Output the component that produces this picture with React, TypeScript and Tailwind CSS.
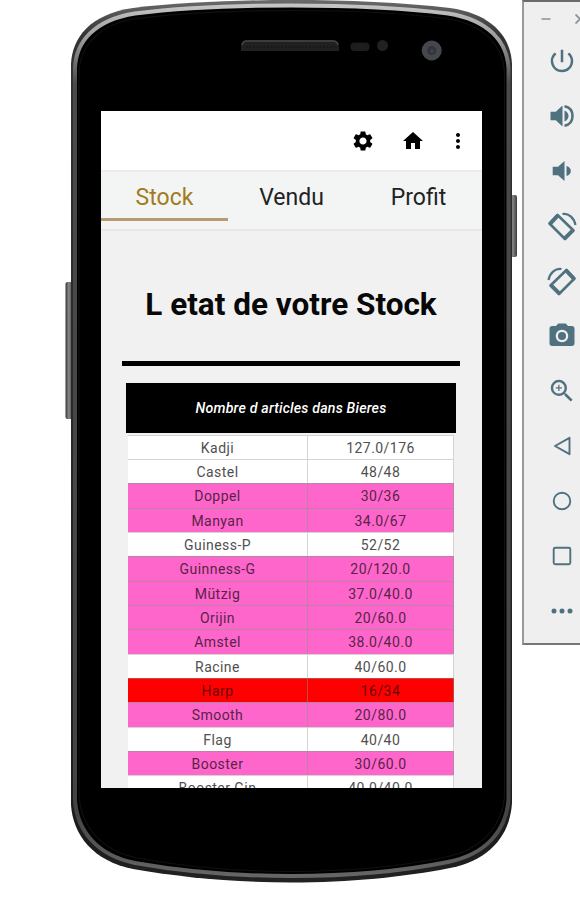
import type { ReactNode } from 'react';
import {
  MdCameraAlt,
  MdHome,
  MdMoreVert,
  MdPowerSettingsNew,
  MdSettings,
  MdZoomIn,
} from 'react-icons/md';

type Level = 'ok' | 'low' | 'critical';

const stock: { name: string; count: string; level: Level }[] = [
  { name: 'Kadji', count: '127.0/176', level: 'ok' },
  { name: 'Castel', count: '48/48', level: 'ok' },
  { name: 'Doppel', count: '30/36', level: 'low' },
  { name: 'Manyan', count: '34.0/67', level: 'low' },
  { name: 'Guiness-P', count: '52/52', level: 'ok' },
  { name: 'Guinness-G', count: '20/120.0', level: 'low' },
  { name: 'Mützig', count: '37.0/40.0', level: 'low' },
  { name: 'Orijin', count: '20/60.0', level: 'low' },
  { name: 'Amstel', count: '38.0/40.0', level: 'low' },
  { name: 'Racine', count: '40/60.0', level: 'ok' },
  { name: 'Harp', count: '16/34', level: 'critical' },
  { name: 'Smooth', count: '20/80.0', level: 'low' },
  { name: 'Flag', count: '40/40', level: 'ok' },
  { name: 'Booster', count: '30/60.0', level: 'low' },
  { name: 'Booster Gin', count: '40.0/40.0', level: 'ok' },
];

const levelClass: Record<Level, string> = {
  ok: 'bg-white border-[#d4d4d4] text-[#505050]',
  low: 'bg-[#ff66cc] border-[#b884a6] text-[#562446]',
  critical: 'bg-[#ff0000] border-[#c04848] text-[#6a0000]',
};

const tabs = ['Stock', 'Vendu', 'Profit'];

export default function App() {
  return (
    <div className="relative flex h-[900px] w-[580px] overflow-hidden bg-white font-['Roboto',sans-serif]">
      <Phone>
        <StockScreen />
      </Phone>
      <EmulatorToolbar />
    </div>
  );
}

function Phone({ children }: { children: ReactNode }) {
  return (
    <div className="relative h-[900px] w-[522px] shrink-0 pt-[111px] pl-[101px]">
      <svg className="absolute inset-0 h-[900px] w-[522px]" viewBox="0 0 522 900">
        <defs>
          <linearGradient id="rim" x1="0" y1="0" x2="0" y2="1">
            <stop offset="0" stopColor="#c4c4c4" />
            <stop offset="0.04" stopColor="#9a9a9a" />
            <stop offset="0.09" stopColor="#4a4a4a" />
            <stop offset="0.93" stopColor="#444" />
            <stop offset="1" stopColor="#666" />
          </linearGradient>
          <linearGradient id="edge" x1="0" y1="0" x2="0" y2="1">
            <stop offset="0" stopColor="#6a6a6a" />
            <stop offset="0.04" stopColor="#333" />
            <stop offset="0.95" stopColor="#1c1c1c" />
            <stop offset="1" stopColor="#222" />
          </linearGradient>
          <linearGradient id="sideKey" x1="0" y1="0" x2="1" y2="0">
            <stop offset="0" stopColor="#333" />
            <stop offset="0.4" stopColor="#888" />
            <stop offset="1" stopColor="#3a3a3a" />
          </linearGradient>
        </defs>
        <rect x="65.5" y="282" width="8" height="137" rx="2" fill="url(#sideKey)" />
        <rect x="510" y="195" width="7" height="62" rx="2" fill="url(#sideKey)" />
        {/* case */}
        <path
          d="M71 64C72 38 90 14 133 8C180 2.5 235 0 291.5 0C348 0 403 2.5 450 8C493 14 511 38 512 64V803C510 835 490 860 450 868C405 877 348 882.5 291.5 882.5C235 882.5 178 877 133 869C93 861 73 835 71 805Z"
          fill="url(#edge)"
        />
        <path
          d="M75 68C76 42 94 20 135 13.500C180 8 235 5.500 291.500 5.500C348 5.500 403 8 448 13.500C489 20 507 42 508.500 68V800C506 830 487 854 448 862C403 871 348 876 291.500 876C235 876 180 871 135 863C96 855 77 830 75 800Z"
          fill="#000"
          stroke="url(#rim)"
          strokeWidth="4"
        />
        <path
          d="M79 72C80 47 98 24 137 18.500C180 13 235 10.500 291.500 10.500C348 10.500 403 13 446 18.500C485 24 503 47 504.500 72V797C502 824 484 849 446 857C403 866 348 871.500 291.500 871.500C235 871.500 180 866 137 858C99 850 81 824 79 797Z"
          fill="#000"
          stroke="#101010"
          strokeWidth="1.200"
        />
        {/* speaker */}
        <path d="M241 51V46Q241 40 247 40H333Q339 40 339 46V51Z" fill="#202020" />
        <path d="M242 45Q243 41 247 41H333Q337 41 338 45" fill="none" stroke="#444" strokeWidth="1.500" />
        <path d="M246 47H338" stroke="#101010" strokeWidth="1" strokeDasharray="2 1.500" />
        {/* sensors and camera */}
        <rect x="350.500" y="42.500" width="19" height="8.500" rx="4" fill="#1d1d1d" />
        <circle cx="382.500" cy="45.500" r="5.500" fill="#212121" />
        <circle cx="431.700" cy="50.500" r="10" fill="#45474c" />
        <circle cx="431.700" cy="50.500" r="4.500" fill="#31343b" />
        <circle cx="432" cy="51" r="2" fill="#3d414b" />
      </svg>
      <div className="relative h-[677px] w-[381px] overflow-hidden bg-[#f1f1f1]">{children}</div>
    </div>
  );
}

function StockScreen() {
  return (
    <>
      <header className="flex h-[59px] items-center bg-white pt-px pl-[249.5px] text-black">
        <MdSettings className="size-[24px]" />
        <MdHome className="ml-[26.5px] size-[24px]" />
        <MdMoreVert className="ml-[20.5px] size-[24px]" />
      </header>

      <nav className="flex h-[61px] border-t-2 border-b-2 border-t-[#ebecec] border-b-[#e5e7e7] bg-[#f3f5f5]">
        {tabs.map((tab, i) => (
          <div
            key={tab}
            className={`h-[49px] flex-1 pt-px text-center text-[23px] leading-[49px] ${
              i === 0 ? 'border-b-[3px] border-[#b89b70] text-[#a27c1c]' : 'text-[#222]'
            }`}
          >
            {tab}
          </div>
        ))}
      </nav>

      <h1 className="mt-[54px] -ml-px text-center text-[31.5px] leading-[40px] font-bold whitespace-nowrap text-[#080808]">
        L etat de votre Stock
      </h1>
      <div className="mt-[36px] ml-[21px] h-[5px] w-[338px] bg-black" />

      <div className="mt-[17px] ml-[25px] flex h-[50px] w-[330px] items-center justify-center bg-black pt-px text-[14.2px] font-medium tracking-[0.18px] text-white italic">
        Nombre d articles dans Bieres
      </div>
      <div className="mt-[1.5px] ml-[27px] w-[326px]">
        {stock.map((row) => (
          <div
            key={row.name}
            className={`flex h-[24.35px] border-t border-r text-center text-[14px] leading-[24.5px] tracking-[0.45px] ${levelClass[row.level]}`}
          >
            <span className="w-[180px] border-r border-inherit">{row.name}</span>
            <span className="flex-1">{row.count}</span>
          </div>
        ))}
      </div>
    </>
  );
}

function EmulatorToolbar() {
  return (
    <aside className="flex h-[645px] w-[77px] shrink-0 flex-col border-t-2 border-b-2 border-l-2 border-t-[#6b6b6b] border-b-[#777] border-l-[#999] bg-[#efefef] text-[#50717f]">
      <div className="flex h-[31px] items-center gap-[24px] pt-[3px] pl-[17px] text-[#8a9296]">
        <svg className="size-[10px] shrink-0" viewBox="0 0 10 10" stroke="currentColor" strokeWidth="1.5">
          <path d="M0.500 5H9.500" />
        </svg>
        <svg className="size-[10px] shrink-0" viewBox="0 0 10 10" stroke="currentColor" strokeWidth="1.8">
          <path d="M0.500 0.500L9.500 9.500M9.500 0.500L0.500 9.500" />
        </svg>
      </div>
      <Tool><MdPowerSettingsNew className="size-[30px]" /></Tool>
      <Tool>
        <svg className="size-[30px]" viewBox="0 0 30 30" fill="currentColor">
          <path d="M3.500 10.800H8.800L15.500 4.500V25.500L8.800 19.200H3.500Z" />
          <path d="M17.500 9.500C20 10.600 21.500 12.500 21.500 15C21.500 17.500 20 19.400 17.500 20.500Z" />
          <path d="M17.500 5.300C22.500 6.300 25.500 10 25.500 15C25.500 20 22.500 23.700 17.500 24.700" fill="none" stroke="currentColor" strokeWidth="2.500" />
        </svg>
      </Tool>
      <Tool>
        <svg className="size-[30px]" viewBox="0 0 30 30" fill="currentColor">
          <path d="M5.700 10.800H11L17.500 5V25L11 19.200H5.700Z" />
          <path d="M19.500 10C22.500 11 23.800 12.600 23.800 15C23.800 17.400 22.500 19 19.500 20Z" />
        </svg>
      </Tool>
      <Tool><RotateIcon /></Tool>
      <Tool>
        <span className="-scale-x-100"><RotateIcon /></span>
      </Tool>
      <Tool><MdCameraAlt className="size-[30px]" /></Tool>
      <Tool><MdZoomIn className="size-[30px]" /></Tool>
      <Tool>
        <svg className="size-[30px]" viewBox="0 0 30 30" fill="none" stroke="currentColor" strokeWidth="1.900" strokeLinejoin="round">
          <path d="M22.500 6.800V23.200L8 15Z" />
        </svg>
      </Tool>
      <Tool>
        <svg className="size-[30px]" viewBox="0 0 30 30" fill="none" stroke="currentColor" strokeWidth="1.900">
          <circle cx="15" cy="15" r="8.300" />
        </svg>
      </Tool>
      <Tool>
        <svg className="size-[30px]" viewBox="0 0 30 30" fill="none" stroke="currentColor" strokeWidth="1.900">
          <rect x="6.700" y="6.700" width="16.600" height="16.600" rx="1.500" />
        </svg>
      </Tool>
      <Tool>
        <svg className="size-[30px]" viewBox="0 0 30 30" fill="currentColor">
          <circle cx="7" cy="15" r="2.500" />
          <circle cx="15" cy="15" r="2.500" />
          <circle cx="23" cy="15" r="2.500" />
        </svg>
      </Tool>
    </aside>
  );
}

function Tool({ children }: { children: ReactNode }) {
  return <div className="flex h-[55.1px] shrink-0 items-center justify-center">{children}</div>;
}

function RotateIcon() {
  return (
    <svg className="size-[32px]" viewBox="0 0 32 32" fill="none" stroke="currentColor">
      <path d="M11.500 5L27.500 20.500L19 29L3.500 13.500Z" strokeWidth="2.600" strokeLinejoin="round" />
      <path d="M4.500 13.500L11.500 6M19 28L26.500 20.500" strokeWidth="3.800" strokeLinecap="round" />
      <path d="M16.500 4C22.500 3 28 7.500 29.500 15" strokeWidth="2.200" />
    </svg>
  );
}
